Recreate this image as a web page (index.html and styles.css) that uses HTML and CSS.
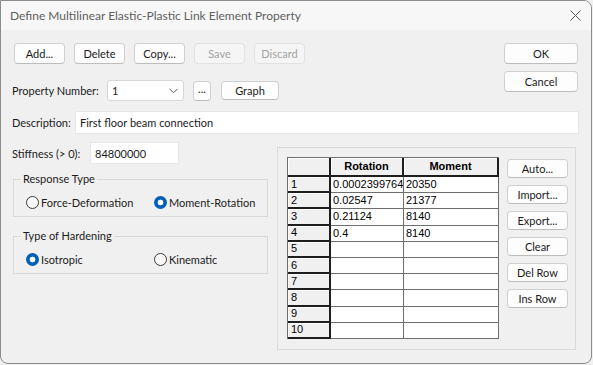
FILE: index.html
```html
<!DOCTYPE html>
<html lang="en">
<head>
    <meta charset="UTF-8">
    <title>Define Multilinear Elastic-Plastic Link Element Property</title>
    <link rel="stylesheet" href="styles.css">
</head>
<body>
    <div class="dialog">
        <div class="titlebar">
            <span class="title">Define Multilinear Elastic-Plastic Link Element Property</span>
            <svg class="close" width="11" height="11" viewBox="0 0 11 11">
                <path d="M0.5 0.5 L10.5 10.5 M10.5 0.5 L0.5 10.5" stroke="#5a5a5a" stroke-width="1" fill="none"/>
            </svg>
        </div>

        <div class="content">
            <div class="top">
                <div class="top-left">
                    <div class="toolbar">
                        <button class="btn tool">Add...</button>
                        <button class="btn tool">Delete</button>
                        <button class="btn tool">Copy...</button>
                        <button class="btn tool" disabled>Save</button>
                        <button class="btn tool" disabled>Discard</button>
                    </div>
                    <div class="prop-row">
                        <span class="label prop-label">Property Number:</span>
                        <div class="select">
                            <span>1</span>
                            <svg width="9" height="6" viewBox="0 0 9 6">
                                <path d="M0.5 0.8 L4.5 4.8 L8.5 0.8" stroke="#5a5a5a" stroke-width="1" fill="none"/>
                            </svg>
                        </div>
                        <button class="btn dots">...</button>
                        <button class="btn graph">Graph</button>
                    </div>
                </div>
                <div class="top-right">
                    <button class="btn main">OK</button>
                    <button class="btn main">Cancel</button>
                </div>
            </div>

            <div class="desc-row">
                <span class="label desc-label">Description:</span>
                <div class="textbox desc">First floor beam connection</div>
            </div>

            <div class="bottom">
                <div class="left">
                    <div class="stiff-row">
                        <span class="label stiff-label">Stiffness (&gt; 0):</span>
                        <div class="textbox stiff">84800000</div>
                    </div>

                    <fieldset class="group response">
                        <legend>Response Type</legend>
                        <div class="radios">
                            <span class="radio"><span class="dot"></span>Force-Deformation</span>
                            <span class="radio"><span class="dot on"></span>Moment-Rotation</span>
                        </div>
                    </fieldset>

                    <fieldset class="group hardening">
                        <legend>Type of Hardening</legend>
                        <div class="radios">
                            <span class="radio"><span class="dot on"></span>Isotropic</span>
                            <span class="radio"><span class="dot"></span>Kinematic</span>
                        </div>
                    </fieldset>
                </div>

                <div class="panel">
                    <div class="grid-frame">
                        <table class="grid">
                            <colgroup>
                                <col class="c-num">
                                <col class="c-rot">
                                <col class="c-mom">
                            </colgroup>
                            <tr class="head">
                                <th></th>
                                <th>Rotation</th>
                                <th>Moment</th>
                            </tr>
                            <tr><th>1</th><td>0.0002399764</td><td>20350</td></tr>
                            <tr><th>2</th><td>0.02547</td><td>21377</td></tr>
                            <tr><th>3</th><td>0.21124</td><td>8140</td></tr>
                            <tr><th>4</th><td>0.4</td><td>8140</td></tr>
                            <tr><th>5</th><td></td><td></td></tr>
                            <tr><th>6</th><td></td><td></td></tr>
                            <tr><th>7</th><td></td><td></td></tr>
                            <tr><th>8</th><td></td><td></td></tr>
                            <tr><th>9</th><td></td><td></td></tr>
                            <tr><th>10</th><td></td><td></td></tr>
                        </table>
                    </div>
                    <div class="side-buttons">
                        <button class="btn side">Auto...</button>
                        <button class="btn side">Import...</button>
                        <button class="btn side">Export...</button>
                        <button class="btn side">Clear</button>
                        <button class="btn side">Del Row</button>
                        <button class="btn side">Ins Row</button>
                    </div>
                </div>
            </div>
        </div>
    </div>
</body>
</html>
```

FILE: styles.css
```css
body {
    margin: 0;
    background: #f0f0f0;
    font-family: Lato, "Noto Sans", sans-serif;
    font-size: 11px;
    color: #1b1b1b;
}
.dialog {
    width: 592px;
    height: 364px;
    box-sizing: border-box;
    border: 1px solid #8c8c8c;
    border-radius: 0 8px 8px 8px;
    background: #f0f0f0;
    overflow: hidden;
}
.titlebar {
    height: 29px;
    display: flex;
    align-items: center;
    justify-content: space-between;
    padding: 0 10px 0 9px;
    background: #f7f7f7;
}
.title {
    color: #5f5f5f;
    font-size: 12px;
}
.content {
    padding: 13px 0 0 11px;
}

/* buttons */
.btn {
    font: inherit;
    color: #1b1b1b;
    background: #fdfdfd;
    border: 1px solid #d0d0d0;
    border-bottom-color: #bcbcbc;
    border-radius: 4px;
    padding: 0;
    height: 21px;
    box-sizing: border-box;
}
.btn:disabled {
    color: #a3a3a3;
    background: #f5f5f5;
    border-color: #e2e2e2;
}

.top {
    display: flex;
    justify-content: space-between;
    padding-right: 13px;
}
.toolbar {
    display: flex;
    gap: 9px;
    margin-left: 2px;
}
.tool {
    width: 51px;
}
.prop-row {
    display: flex;
    align-items: center;
    margin-top: 16px;
}
.label {
    white-space: nowrap;
    flex: none;
}
.prop-label { width: 95px; }
.desc-label { width: 63px; }
.stiff-label { width: 78px; }
.select {
    width: 77px;
    height: 21px;
    box-sizing: border-box;
    display: flex;
    align-items: center;
    justify-content: space-between;
    padding: 0 5px 0 4px;
    background: #fff;
    border: 1px solid #d6d6d6;
    border-radius: 3px;
}
.dots {
    margin-left: 9px;
    width: 18px;
    height: 20px;
    padding-bottom: 4px;
}
.graph {
    margin-left: 10px;
    width: 58px;
    height: 19px;
}
.top-right {
    display: flex;
    flex-direction: column;
    gap: 7px;
}
.main {
    width: 74px;
}

.desc-row {
    display: flex;
    align-items: center;
    margin-top: 10px;
}
.textbox {
    background: #fff;
    border: 1px solid #e6e6e6;
    box-sizing: border-box;
    display: flex;
    align-items: center;
    padding-left: 4px;
}
.desc {
    width: 504px;
    height: 23px;
}

.bottom {
    display: flex;
    margin-top: 8px;
}
.left {
    width: 256px;
}
.stiff-row {
    display: flex;
    align-items: center;
}
.stiff {
    width: 89px;
    height: 22px;
}
.group {
    margin: 8px 0 0 1px;
    padding: 0;
    border: 1px solid #d9d9d9;
    width: 255px;
    box-sizing: border-box;
}
.group legend {
    margin-left: 7px;
    padding: 0 2px;
    line-height: 14px;
}
.radios {
    display: grid;
    grid-template-columns: 128px 1fr;
    padding: 10px 0 7px 12px;
}
.hardening {
    margin-top: 12px;
}
.radio {
    display: flex;
    align-items: center;
    gap: 2px;
    height: 13px;
}
.dot {
    width: 13px;
    height: 13px;
    box-sizing: border-box;
    border-radius: 50%;
    border: 1px solid #3a3a3a;
    background: #fafafa;
}
.dot.on {
    border: none;
    background: radial-gradient(circle, #fff 0 2.6px, #005fb8 3.2px);
}

/* grid panel */
.panel {
    margin: 5px 0 0 9px;
    width: 299px;
    height: 203px;
    box-sizing: border-box;
    border: 1px solid #dadada;
    padding: 9px 0 0 9px;
    display: flex;
    gap: 8px;
}
.grid-frame {
    align-self: flex-start;
}
.grid {
    border-collapse: separate;
    border-spacing: 0;
    table-layout: fixed;
    width: 212px;
    border-left: 1px solid #6e6e6e;
    border-top: 1px solid #6e6e6e;
    font-family: "Liberation Sans", Arial, sans-serif;
    font-size: 11px;
    color: #000;
}
.c-num { width: 43px; }
.c-rot { width: 73px; }
.c-mom { width: 95px; }
.grid tr {
    height: 16.2px;
}
.grid tr.head {
    height: 19px;
}
.grid th {
    background: #f0f0f0;
    border-right: 2px solid #1e1e1e;
    border-bottom: 2px solid #1e1e1e;
    box-shadow: inset 1px 1px 0 #fff;
    font-weight: normal;
    text-align: left;
    padding: 0 3px;
    line-height: 13px;
}
.grid tr.head th {
    font-weight: bold;
    text-align: center;
}
.grid td {
    background: #fff;
    border-right: 1px solid #6e6e6e;
    border-bottom: 1px solid #6e6e6e;
    padding: 0 2px;
    line-height: 13px;
    white-space: nowrap;
    overflow: hidden;
}
.side-buttons {
    display: flex;
    flex-direction: column;
    gap: 7px;
    margin-top: 2px;
}
.side {
    width: 61px;
    height: 19px;
}
```
